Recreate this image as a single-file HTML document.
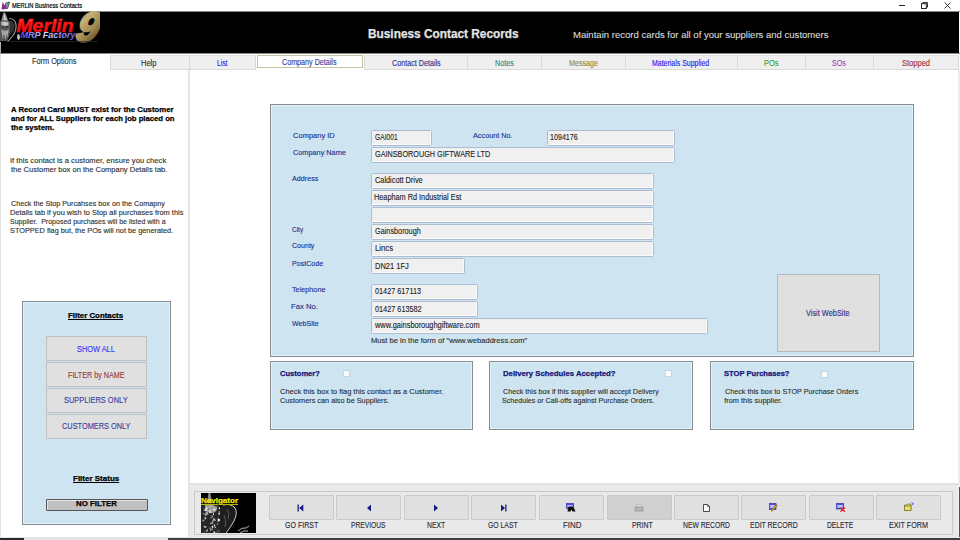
<!DOCTYPE html>
<html><head><meta charset="utf-8"><title>MERLIN Business Contacts</title>
<style>
*{margin:0;padding:0;box-sizing:border-box}
html,body{width:960px;height:540px;overflow:hidden;background:#fff;font-family:"Liberation Sans",sans-serif}
.a{position:absolute}
.t{position:absolute;white-space:pre;line-height:10px;transform-origin:0 0}
</style></head><body>
<div class="a" style="left:0px;top:0px;width:960px;height:11px;background:#fff"></div>
<svg class="a" style="left:1px;top:1px" width="9" height="9" viewBox="0 0 9 9">
<path d="M0.5 8.5 L1.5 1 L3.5 4.5 L5 1 L6 8 Z" fill="#8a2a8a"/>
<path d="M1.5 1 L3.5 4.5 L2.8 6 Z" fill="#c03060"/>
<path d="M5 1 L8.5 0.8 L6 8 Z" fill="#3a8a6a" opacity="0.8"/>
<path d="M6.5 2 L8.5 1 L6.5 8" stroke="#333" stroke-width="0.8" fill="none"/>
</svg>
<div class="a" style="left:899px;top:5px;width:6px;height:1px;background:#222"></div>
<svg class="a" style="left:921px;top:2px" width="7" height="7" viewBox="0 0 7 7">
<rect x="0.5" y="1.7" width="4.8" height="4.8" fill="none" stroke="#222" stroke-width="1"/>
<path d="M1.8 1.7 V0.5 H6.5 V5.2 H5.3" fill="none" stroke="#222" stroke-width="0.9"/>
</svg>
<svg class="a" style="left:944px;top:2px" width="7" height="7" viewBox="0 0 7 7">
<path d="M0.5 0.5 L6.5 6.5 M6.5 0.5 L0.5 6.5" stroke="#222" stroke-width="0.9"/>
</svg>
<div class="a" style="left:0px;top:11px;width:960px;height:1px;background:#8a8a8a"></div>
<div class="a" style="left:0px;top:12px;width:959px;height:41px;background:#000"></div>
<div class="a" style="left:0px;top:53px;width:960px;height:1px;background:#8a8a8a"></div>
<svg class="a" style="left:0;top:11px" width="100" height="32" viewBox="0 0 100 32">
<defs>
<linearGradient id="gr" x1="0" y1="0" x2="0" y2="1"><stop offset="0" stop-color="#ff8080"/><stop offset="0.3" stop-color="#ff2020"/><stop offset="1" stop-color="#e00000"/></linearGradient>
<linearGradient id="gb" x1="0" y1="0" x2="1" y2="0"><stop offset="0" stop-color="#4848f0"/><stop offset="0.45" stop-color="#d8d8ff"/><stop offset="1" stop-color="#5858f8"/></linearGradient>
<linearGradient id="gg" x1="0" y1="0" x2="0.6" y2="1"><stop offset="0" stop-color="#6a5a34"/><stop offset="0.35" stop-color="#c8b27a"/><stop offset="0.7" stop-color="#a08850"/><stop offset="1" stop-color="#5a4a24"/></linearGradient>
</defs>
<path d="M3.5 1.5 L5 1.5 L8.5 10.5 L1 10.5 Z" fill="#9a9a9a"/>
<path d="M4 2 L6.5 10 L4.2 10 Z" fill="#d8d8d8"/>
<path d="M0 10 Q5 8.5 10 10.5 L10.5 19 Q10 25 7 30 L0 30 Z" fill="#555"/>
<path d="M1.5 11 Q5 10 8.5 11.5 L8.5 14 Q5 16 1.5 14 Z" fill="#c4c4c4"/>
<path d="M2 16 H4 M5.5 16 H8" stroke="#222" stroke-width="1"/>
<path d="M1 18 Q5 21 9 18 Q8 23 5 25 Q2 23 1 18 Z" fill="#9a9a9a"/>
<path d="M2 20 L3 27 M5 21 L5.5 28 M8 20 L7 26" stroke="#d0d0d0" stroke-width="0.7"/>
<path d="M9 7.5 Q15.5 7.5 16 14 Q16.5 20 12.5 25 Q9.5 29 7.5 30.5" stroke="#9a9a9a" stroke-width="1.1" fill="none"/>
<path d="M10 9.5 Q14.5 10.5 14.5 15 Q14.5 20 10.5 24 L10 11 Z" fill="#333"/>
<ellipse cx="18.5" cy="26" rx="1.4" ry="3" fill="#c8c8c8"/>
<g transform="translate(87 30) skewX(-12) translate(-87 -30)"><text x="74.5" y="30.2" font-family="Liberation Sans" font-weight="bold" font-style="italic" font-size="41" fill="url(#gg)" stroke="url(#gg)" stroke-width="2.6" textLength="22.5" lengthAdjust="spacingAndGlyphs">9</text></g>
<text x="16.5" y="20.8" font-family="Liberation Sans" font-weight="bold" font-style="italic" font-size="18" fill="url(#gr)" stroke="#f01010" stroke-width="0.6" textLength="57" lengthAdjust="spacingAndGlyphs">Merlin</text>
<text x="20.5" y="27.2" font-family="Liberation Sans" font-weight="bold" font-style="italic" font-size="8.6" fill="url(#gb)" textLength="55" lengthAdjust="spacingAndGlyphs">MRP Factory</text>
<rect x="9" y="30" width="89" height="0.7" fill="#2c2c2c"/>
</svg>
<div class="a" style="left:0px;top:42px;width:1px;height:11px;background:#b0b0b0"></div>
<div class="a" style="left:0px;top:54px;width:1px;height:484px;background:#e2e2e2"></div>
<div class="a" style="left:110px;top:55px;width:80px;height:15px;background:#efefef;border:1px solid #dadada;border-top-color:#e4e4e4"></div>
<div class="a" style="left:189px;top:55px;width:67px;height:15px;background:#efefef;border:1px solid #dadada;border-top-color:#e4e4e4"></div>
<div class="a" style="left:364px;top:55px;width:104px;height:15px;background:#efefef;border:1px solid #dadada;border-top-color:#e4e4e4"></div>
<div class="a" style="left:467px;top:55px;width:75px;height:15px;background:#efefef;border:1px solid #dadada;border-top-color:#e4e4e4"></div>
<div class="a" style="left:541px;top:55px;width:85px;height:15px;background:#efefef;border:1px solid #dadada;border-top-color:#e4e4e4"></div>
<div class="a" style="left:625px;top:55px;width:113px;height:15px;background:#efefef;border:1px solid #dadada;border-top-color:#e4e4e4"></div>
<div class="a" style="left:737px;top:55px;width:69px;height:15px;background:#efefef;border:1px solid #dadada;border-top-color:#e4e4e4"></div>
<div class="a" style="left:805px;top:55px;width:69px;height:15px;background:#efefef;border:1px solid #dadada;border-top-color:#e4e4e4"></div>
<div class="a" style="left:873px;top:55px;width:86px;height:15px;background:#efefef;border:1px solid #dadada;border-top-color:#e4e4e4"></div>
<div class="a" style="left:257px;top:55px;width:106px;height:13px;background:#fff;border:1px solid #c4c4a2"></div>
<div class="a" style="left:188px;top:70px;width:2px;height:468px;background:#e6e6e6"></div>
<div class="a" style="left:958px;top:70px;width:2px;height:417px;background:#ececec"></div>
<div class="a" style="left:22px;top:301px;width:149px;height:224px;background:#cee4f1;border:1px solid #868b8d;box-shadow:inset 0 0 0 1px #dcf2fc"></div>
<div class="a" style="left:46px;top:336px;width:101px;height:25px;background:#e0e0e0;border:1px solid #c0c0c0;"></div>
<div class="a" style="left:46px;top:362px;width:101px;height:25px;background:#e0e0e0;border:1px solid #c0c0c0;"></div>
<div class="a" style="left:46px;top:388px;width:101px;height:25px;background:#e0e0e0;border:1px solid #c0c0c0;"></div>
<div class="a" style="left:46px;top:414px;width:101px;height:25px;background:#e0e0e0;border:1px solid #c0c0c0;"></div>
<div class="a" style="left:46px;top:499px;width:102px;height:12px;background:#c0c0c0;border:1px solid #555;border-radius:1px;box-shadow:inset 1px 1px 0 #e4e4e4"></div>
<div class="a" style="left:270px;top:104px;width:644px;height:253px;background:#cee4f1;border:1px solid #868b8d;box-shadow:inset 0 0 0 1px #dcf2fc"></div>
<div class="a" style="left:371px;top:130px;width:61px;height:16px;background:#f0f0f0;border:1px solid #adbcd0;border-radius:1.5px;box-shadow:inset -1px -1px 0 #fbfbfb"></div>
<div class="a" style="left:547px;top:130px;width:128px;height:16px;background:#f0f0f0;border:1px solid #adbcd0;border-radius:1.5px;box-shadow:inset -1px -1px 0 #fbfbfb"></div>
<div class="a" style="left:371px;top:147px;width:304px;height:16px;background:#f0f0f0;border:1px solid #adbcd0;border-radius:1.5px;box-shadow:inset -1px -1px 0 #fbfbfb"></div>
<div class="a" style="left:371px;top:173px;width:283px;height:16px;background:#f0f0f0;border:1px solid #adbcd0;border-radius:1.5px;box-shadow:inset -1px -1px 0 #fbfbfb"></div>
<div class="a" style="left:371px;top:190px;width:283px;height:16px;background:#f0f0f0;border:1px solid #adbcd0;border-radius:1.5px;box-shadow:inset -1px -1px 0 #fbfbfb"></div>
<div class="a" style="left:371px;top:207px;width:283px;height:16px;background:#f0f0f0;border:1px solid #adbcd0;border-radius:1.5px;box-shadow:inset -1px -1px 0 #fbfbfb"></div>
<div class="a" style="left:371px;top:224px;width:283px;height:16px;background:#f0f0f0;border:1px solid #adbcd0;border-radius:1.5px;box-shadow:inset -1px -1px 0 #fbfbfb"></div>
<div class="a" style="left:371px;top:241px;width:283px;height:16px;background:#f0f0f0;border:1px solid #adbcd0;border-radius:1.5px;box-shadow:inset -1px -1px 0 #fbfbfb"></div>
<div class="a" style="left:371px;top:258px;width:94px;height:16px;background:#f0f0f0;border:1px solid #adbcd0;border-radius:1.5px;box-shadow:inset -1px -1px 0 #fbfbfb"></div>
<div class="a" style="left:371px;top:284px;width:107px;height:16px;background:#f0f0f0;border:1px solid #adbcd0;border-radius:1.5px;box-shadow:inset -1px -1px 0 #fbfbfb"></div>
<div class="a" style="left:371px;top:301px;width:107px;height:16px;background:#f0f0f0;border:1px solid #adbcd0;border-radius:1.5px;box-shadow:inset -1px -1px 0 #fbfbfb"></div>
<div class="a" style="left:371px;top:318px;width:337px;height:16px;background:#f0f0f0;border:1px solid #adbcd0;border-radius:1.5px;box-shadow:inset -1px -1px 0 #fbfbfb"></div>
<div class="a" style="left:777px;top:274px;width:103px;height:78px;background:#e0e0e0;border:1px solid #c0c0c0;border-color:#b8b8b8"></div>
<div class="a" style="left:270px;top:361px;width:203px;height:69px;background:#cee4f1;border:1px solid #868b8d;box-shadow:inset 0 0 0 1px #dcf2fc"></div>
<div class="a" style="left:489px;top:361px;width:204px;height:69px;background:#cee4f1;border:1px solid #868b8d;box-shadow:inset 0 0 0 1px #dcf2fc"></div>
<div class="a" style="left:710px;top:361px;width:204px;height:69px;background:#cee4f1;border:1px solid #868b8d;box-shadow:inset 0 0 0 1px #dcf2fc"></div>
<div class="a" style="left:343px;top:370px;width:7px;height:7px;background:#fbfbfb;border:1px solid #c4d4e0"></div>
<div class="a" style="left:665px;top:370px;width:7px;height:7px;background:#fbfbfb;border:1px solid #c4d4e0"></div>
<div class="a" style="left:821px;top:371px;width:7px;height:7px;background:#fbfbfb;border:1px solid #c4d4e0"></div>
<div class="a" style="left:190px;top:483px;width:768px;height:55px;background:#e9e9e9"></div>
<div class="a" style="left:190px;top:483px;width:768px;height:3px;background:#e4e4e4"></div>
<div class="a" style="left:190px;top:486px;width:768px;height:1px;background:#f2f2f2"></div>
<div class="a" style="left:194px;top:491px;width:759px;height:44px;border:1px solid #c8c8c8"></div>
<div class="a" style="left:958px;top:487px;width:1px;height:51px;background:#f2f2f2"></div>
<div class="a" style="left:959px;top:487px;width:1px;height:53px;background:#505050"></div>
<div class="a" style="left:0px;top:537px;width:960px;height:1px;background:#e4e4e4"></div>
<div class="a" style="left:0px;top:538px;width:24px;height:2px;background:#2a2a2a"></div>
<div class="a" style="left:24px;top:538px;width:144px;height:2px;background:#e4e4e4"></div>
<div class="a" style="left:168px;top:538px;width:792px;height:2px;background:#404040"></div>
<div class="a" style="left:201px;top:493px;width:55px;height:40px;background:#000"></div>
<svg class="a" style="left:201px;top:493px" width="55" height="40" viewBox="0 0 55 40">
<path d="M7.5 0 L9.5 0 L11 10 L6 10 Z" fill="#8a8a8a"/>
<path d="M0 12 Q8 8 18 12 L22 22 L20 40 L0 40 Z" fill="#262626"/>
<path d="M4 12 Q10 10 16 14 Q17 18 12 20 Q6 20 4 16 Z" fill="#a0a0a0"/>
<rect x="7.8" y="16.2" width="0.9" height="1.4" fill="#ffffff"/><rect x="8.7" y="13.6" width="0.8" height="1.3" fill="#d8d8d8"/><rect x="2.5" y="14.5" width="0.9" height="1.5" fill="#606060"/><rect x="20.9" y="29.7" width="1.5" height="1.3" fill="#ffffff"/><rect x="21.5" y="13.3" width="1.1" height="1.0" fill="#d8d8d8"/><rect x="3.5" y="20.6" width="0.9" height="1.5" fill="#d8d8d8"/><rect x="4.9" y="14.7" width="1.5" height="1.5" fill="#ffffff"/><rect x="11.4" y="26.9" width="1.4" height="1.9" fill="#a0a0a0"/><rect x="8.6" y="19.0" width="1.6" height="1.1" fill="#d8d8d8"/><rect x="13.1" y="26.7" width="1.7" height="1.1" fill="#a0a0a0"/><rect x="21.6" y="15.3" width="1.0" height="1.2" fill="#606060"/><rect x="20.6" y="23.8" width="1.7" height="1.5" fill="#ffffff"/><rect x="19.4" y="20.8" width="1.5" height="1.5" fill="#a0a0a0"/><rect x="10.6" y="35.5" width="1.4" height="1.6" fill="#a0a0a0"/><rect x="2.3" y="31.6" width="1.1" height="1.3" fill="#606060"/><rect x="15.0" y="12.6" width="1.2" height="1.5" fill="#606060"/><rect x="11.4" y="18.1" width="1.0" height="1.1" fill="#a0a0a0"/><rect x="9.2" y="36.4" width="1.0" height="1.3" fill="#ffffff"/><rect x="6.8" y="15.8" width="1.8" height="1.1" fill="#606060"/><rect x="9.7" y="22.0" width="1.9" height="1.0" fill="#606060"/><rect x="4.7" y="18.5" width="0.8" height="1.8" fill="#d8d8d8"/><rect x="4.8" y="19.9" width="1.3" height="1.2" fill="#d8d8d8"/><rect x="12.9" y="38.7" width="1.3" height="1.8" fill="#ffffff"/><rect x="21.0" y="31.1" width="1.3" height="1.3" fill="#606060"/><rect x="11.1" y="23.2" width="0.9" height="1.1" fill="#d8d8d8"/><rect x="4.4" y="21.5" width="0.9" height="1.5" fill="#ffffff"/><rect x="12.3" y="38.6" width="0.9" height="1.0" fill="#ffffff"/><rect x="8.9" y="29.8" width="1.5" height="1.4" fill="#a0a0a0"/><rect x="3.4" y="25.7" width="1.4" height="1.2" fill="#606060"/><rect x="4.0" y="33.0" width="1.4" height="1.6" fill="#a0a0a0"/><rect x="11.8" y="17.7" width="1.0" height="1.5" fill="#a0a0a0"/><rect x="1.6" y="26.8" width="1.6" height="1.1" fill="#ffffff"/><rect x="8.7" y="16.7" width="1.4" height="1.7" fill="#d8d8d8"/><rect x="7.9" y="18.2" width="1.8" height="1.8" fill="#d8d8d8"/><rect x="16.5" y="18.3" width="1.2" height="0.8" fill="#606060"/><rect x="1.6" y="19.8" width="1.0" height="1.5" fill="#a0a0a0"/><rect x="8.2" y="34.6" width="1.9" height="1.2" fill="#a0a0a0"/><rect x="5.6" y="18.4" width="1.2" height="1.4" fill="#d8d8d8"/><rect x="21.7" y="29.1" width="1.4" height="1.6" fill="#ffffff"/><rect x="17.8" y="14.4" width="1.9" height="1.7" fill="#ffffff"/><rect x="16.8" y="25.4" width="1.3" height="1.6" fill="#d8d8d8"/><rect x="2.8" y="38.5" width="1.4" height="1.7" fill="#606060"/><rect x="2.8" y="16.4" width="0.8" height="1.5" fill="#d8d8d8"/><rect x="10.8" y="30.4" width="1.6" height="1.2" fill="#606060"/><rect x="12.5" y="15.7" width="1.8" height="1.7" fill="#ffffff"/><rect x="3.2" y="33.0" width="1.3" height="1.8" fill="#d8d8d8"/><rect x="18.3" y="17.9" width="1.1" height="1.4" fill="#a0a0a0"/><rect x="17.0" y="21.1" width="1.8" height="0.9" fill="#606060"/><rect x="16.5" y="37.1" width="1.8" height="1.9" fill="#606060"/><rect x="3.7" y="16.3" width="1.8" height="1.7" fill="#ffffff"/><rect x="13.8" y="33.7" width="1.0" height="1.4" fill="#d8d8d8"/><rect x="16.2" y="27.6" width="1.6" height="1.4" fill="#a0a0a0"/><rect x="11.1" y="33.7" width="1.1" height="1.1" fill="#ffffff"/><rect x="17.2" y="26.2" width="1.7" height="1.9" fill="#ffffff"/><rect x="10.3" y="29.2" width="1.6" height="1.3" fill="#d8d8d8"/><rect x="12.2" y="25.4" width="1.6" height="1.9" fill="#d8d8d8"/><rect x="20.8" y="19.3" width="1.8" height="1.0" fill="#d8d8d8"/><rect x="3.6" y="24.4" width="1.6" height="1.3" fill="#ffffff"/><rect x="5.5" y="20.5" width="1.9" height="1.0" fill="#ffffff"/><rect x="16.0" y="30.5" width="1.1" height="1.0" fill="#d8d8d8"/><rect x="10.8" y="32.9" width="1.3" height="1.4" fill="#ffffff"/><rect x="21.8" y="35.3" width="1.6" height="2.0" fill="#d8d8d8"/><rect x="9.5" y="23.8" width="1.2" height="1.7" fill="#a0a0a0"/><rect x="1.4" y="27.5" width="1.6" height="1.3" fill="#606060"/><rect x="11.9" y="20.3" width="0.9" height="1.9" fill="#ffffff"/><rect x="5.8" y="36.5" width="1.1" height="0.8" fill="#ffffff"/><rect x="17.4" y="19.6" width="1.8" height="1.8" fill="#d8d8d8"/><rect x="15.2" y="38.5" width="1.0" height="1.9" fill="#606060"/><rect x="13.0" y="31.6" width="1.1" height="1.8" fill="#ffffff"/><rect x="4.9" y="37.1" width="1.9" height="1.6" fill="#a0a0a0"/>
<path d="M19 14 Q27 9 33 14 Q37 19 34 26 Q30 34 24 40 L19 40 Z" fill="#1e1e1e"/>
<path d="M22 12 Q30 10 34 15 Q37 20 33 28 Q29 35 25 40" stroke="#cfcfcf" stroke-width="1" fill="none"/>
<path d="M26 16 Q29 20 27 26 M23 22 Q26 28 24 34" stroke="#6a6a6a" stroke-width="0.8" fill="none"/>
<path d="M37 38 Q41 34 45 35 L48 33 M39 40 Q43 37 47 38" stroke="#c8c8c8" stroke-width="0.9" fill="none"/>
</svg>
<div class="a" style="left:269px;top:495px;width:65px;height:25px;background:#e0e0e0;border:1px solid #cacaca;border-radius:1px;"></div>
<div class="a" style="left:336px;top:495px;width:65px;height:25px;background:#e0e0e0;border:1px solid #cacaca;border-radius:1px;"></div>
<div class="a" style="left:404px;top:495px;width:65px;height:25px;background:#e0e0e0;border:1px solid #cacaca;border-radius:1px;"></div>
<div class="a" style="left:471px;top:495px;width:65px;height:25px;background:#e0e0e0;border:1px solid #cacaca;border-radius:1px;"></div>
<div class="a" style="left:539px;top:495px;width:65px;height:25px;background:#e0e0e0;border:1px solid #cacaca;border-radius:1px;"></div>
<div class="a" style="left:607px;top:495px;width:65px;height:25px;background:#e0e0e0;border:1px solid #cacaca;border-radius:1px;background:#d0d0d0;border-color:#c8c8c8"></div>
<div class="a" style="left:674px;top:495px;width:65px;height:25px;background:#e0e0e0;border:1px solid #cacaca;border-radius:1px;"></div>
<div class="a" style="left:741px;top:495px;width:65px;height:25px;background:#e0e0e0;border:1px solid #cacaca;border-radius:1px;"></div>
<div class="a" style="left:809px;top:495px;width:65px;height:25px;background:#e0e0e0;border:1px solid #cacaca;border-radius:1px;"></div>
<div class="a" style="left:876px;top:495px;width:65px;height:25px;background:#e0e0e0;border:1px solid #cacaca;border-radius:1px;"></div>
<svg class="a" style="left:297px;top:504px" width="7" height="8" viewBox="0 0 7 8"><rect x="0.5" y="0.5" width="1.3" height="7" fill="#1a1a80"/><path d="M6.3 0.5 V7.5 L2.2 4 Z" fill="#1a1a80"/></svg>
<svg class="a" style="left:366px;top:504px" width="6" height="8" viewBox="0 0 6 8"><path d="M5 0.5 V7.5 L1 4 Z" fill="#1a1a80"/></svg>
<svg class="a" style="left:433px;top:504px" width="6" height="8" viewBox="0 0 6 8"><path d="M1 0.5 V7.5 L5 4 Z" fill="#1a1a80"/></svg>
<svg class="a" style="left:500px;top:504px" width="8" height="8" viewBox="0 0 8 8"><path d="M1 0.5 V7.5 L5 4 Z" fill="#1a1a80"/><rect x="5.2" y="0.5" width="1.3" height="7" fill="#1a1a80"/></svg>
<svg class="a" style="left:566px;top:503px" width="10" height="9" viewBox="0 0 10 9"><rect x="0.5" y="0.5" width="7" height="5" fill="#4a4aff" stroke="#2020a0" stroke-width="0.6"/><rect x="1.3" y="2" width="5.4" height="2.5" fill="#b8b8ff"/><path d="M2 5 Q2 3.5 3.5 3.5 L6 3.5 Q7.5 3.5 8 5 L9.5 8.5 L6.5 8.5 L5.5 6.5 L4.5 8.5 L1.5 8.5 Z" fill="#111"/></svg>
<svg class="a" style="left:634px;top:504px" width="10" height="8" viewBox="0 0 10 8"><path d="M2.5 0.5 H8 L8.5 3 H2.5 Z" fill="#e0e0e0" stroke="#a8a8a8" stroke-width="0.5"/><path d="M0.5 3.5 Q0.5 2.5 2 2.5 H8.5 Q9.5 2.5 9.5 3.5 V7.5 H0.5 Z" fill="#a4a4a4"/><path d="M2 5 H8" stroke="#cfcfcf" stroke-width="1"/></svg>
<svg class="a" style="left:703px;top:504px" width="7" height="8" viewBox="0 0 7 8"><path d="M0.5 0.5 H4.5 L6.5 2.5 V7.5 H0.5 Z" fill="#fff" stroke="#222" stroke-width="0.8"/><path d="M4.5 0.5 V2.5 H6.5" fill="none" stroke="#222" stroke-width="0.6"/></svg>
<svg class="a" style="left:769px;top:503px" width="9" height="9" viewBox="0 0 9 9"><rect x="0.5" y="0.5" width="6.5" height="6" fill="#5050e0" stroke="#202090" stroke-width="0.6"/><rect x="1.2" y="2" width="5" height="3" fill="#c0c0ff"/><path d="M3 8.5 L8.5 2.5 L7 1.5 L2 7 Z" fill="#c8a030" stroke="#604000" stroke-width="0.4"/></svg>
<svg class="a" style="left:836px;top:503px" width="10" height="9" viewBox="0 0 10 9"><rect x="0.5" y="0.5" width="7" height="5.5" fill="#5050e0" stroke="#202090" stroke-width="0.6"/><rect x="1.3" y="2" width="5.4" height="2.8" fill="#c0c0ff"/><path d="M4.5 4.5 L9 8.7 M9 4.5 L4.5 8.7" stroke="#e02020" stroke-width="1.3"/></svg>
<svg class="a" style="left:904px;top:502px" width="10" height="9" viewBox="0 0 10 9"><path d="M0.5 3 H3 L3.8 2 H7 V8.5 H0.5 Z" fill="#d8d060" stroke="#6a6020" stroke-width="0.6"/><rect x="0.5" y="4" width="6.5" height="4.5" fill="#e8e070" stroke="#6a6020" stroke-width="0.6"/><path d="M7.5 0.5 L9.3 1.5 L8.5 3" fill="none" stroke="#3030ff" stroke-width="0.8"/></svg>
<div id="title" class="t" style="left:11.59px;top:1.00px;font-size:7px;font-weight:normal;color:#000;transform:scaleX(0.8118);-webkit-text-stroke:0.12px #000;-webkit-text-stroke:0.2px #000">MERLIN Business Contacts</div>
<div id="hdr1" class="t" style="left:368.01px;top:29.00px;font-size:12px;font-weight:bold;color:#e4e4e4;transform:scaleX(0.9868);-webkit-text-stroke:0.25px #e4e4e4;">Business Contact Records</div>
<div id="hdr2" class="t" style="left:572.96px;top:30.01px;font-size:9.2px;font-weight:normal;color:#d8d8d8;transform:scaleX(1.0382);-webkit-text-stroke:0.12px #d8d8d8;">Maintain record cards for all of your suppliers and customers</div>
<div id="tab0" class="t" style="left:31.52px;top:57.01px;font-size:8.2px;font-weight:normal;color:#2a3040;transform:scaleX(0.8958);-webkit-text-stroke:0.12px #2a3040;">Form Options</div>
<div id="tab1" class="t" style="left:141.12px;top:59.01px;font-size:8.2px;font-weight:normal;color:#2a3040;transform:scaleX(0.9182);-webkit-text-stroke:0.12px #2a3040;">Help</div>
<div id="tab2" class="t" style="left:216.86px;top:59.01px;font-size:8.2px;font-weight:normal;color:#1818f0;transform:scaleX(0.8216);-webkit-text-stroke:0.12px #1818f0;">List</div>
<div id="tab3" class="t" style="left:282.08px;top:58.01px;font-size:8.2px;font-weight:normal;color:#38389a;transform:scaleX(0.8746);-webkit-text-stroke:0.12px #38389a;">Company Details</div>
<div id="tab4" class="t" style="left:391.78px;top:59.01px;font-size:8.2px;font-weight:normal;color:#2e2e8e;transform:scaleX(0.8770);-webkit-text-stroke:0.12px #2e2e8e;">Contact Details</div>
<div id="tab5" class="t" style="left:494.99px;top:59.01px;font-size:8.2px;font-weight:normal;color:#2a8890;transform:scaleX(0.8794);-webkit-text-stroke:0.12px #2a8890;">Notes</div>
<div id="tab6" class="t" style="left:569.06px;top:59.01px;font-size:8.2px;font-weight:normal;color:#8c8c40;transform:scaleX(0.8742);-webkit-text-stroke:0.12px #8c8c40;">Message</div>
<div id="tab7" class="t" style="left:652.47px;top:59.01px;font-size:8.2px;font-weight:normal;color:#2020f0;transform:scaleX(0.8495);-webkit-text-stroke:0.12px #2020f0;">Materials Supplied</div>
<div id="tab8" class="t" style="left:763.87px;top:59.01px;font-size:8.2px;font-weight:normal;color:#30a030;transform:scaleX(0.9075);-webkit-text-stroke:0.12px #30a030;">POs</div>
<div id="tab9" class="t" style="left:832.13px;top:59.01px;font-size:8.2px;font-weight:normal;color:#a040c0;transform:scaleX(0.8667);-webkit-text-stroke:0.12px #a040c0;">SOs</div>
<div id="tab10" class="t" style="left:902.15px;top:59.01px;font-size:8.2px;font-weight:normal;color:#a03030;transform:scaleX(0.9188);-webkit-text-stroke:0.12px #a03030;">Stopped</div>
<div id="l1" class="t" style="left:11.00px;top:105.00px;font-size:7.9px;font-weight:bold;color:#000000;transform:scaleX(0.9820);-webkit-text-stroke:0.25px #000000;">A Record Card MUST exist for the Customer</div>
<div id="l2" class="t" style="left:11.00px;top:114.00px;font-size:7.9px;font-weight:bold;color:#000000;transform:scaleX(0.9738);-webkit-text-stroke:0.25px #000000;">and for ALL Suppliers for each job placed on</div>
<div id="l3" class="t" style="left:11.00px;top:123.00px;font-size:7.9px;font-weight:bold;color:#000000;transform:scaleX(0.9958);-webkit-text-stroke:0.25px #000000;">the system.</div>
<div id="l4" class="t" style="left:9.97px;top:156.01px;font-size:7.4px;font-weight:normal;color:#2c302c;transform:scaleX(1.0333);-webkit-text-stroke:0.12px #2c302c;">If this contact is a customer, ensure you check</div>
<div id="l5" class="t" style="left:11.00px;top:165.01px;font-size:7.4px;font-weight:normal;color:#2c302c;transform:scaleX(1.0176);-webkit-text-stroke:0.12px #2c302c;">the Customer box on the Company Details tab.</div>
<div id="l6" class="t" style="left:11.00px;top:199.01px;font-size:7.4px;font-weight:normal;color:#2c302c;transform:scaleX(0.9750);-webkit-text-stroke:0.12px #2c302c;">Check the Stop Purcahses box on the Comapny</div>
<div id="l7" class="t" style="left:10.00px;top:208.00px;font-size:7.4px;font-weight:normal;color:#2c302c;transform:scaleX(1.0026);-webkit-text-stroke:0.12px #2c302c;">Details tab if you wish to Stop all purchases from this</div>
<div id="l8" class="t" style="left:10.05px;top:217.00px;font-size:7.4px;font-weight:normal;color:#2c302c;transform:scaleX(0.9490);-webkit-text-stroke:0.12px #2c302c;">Supplier.  Proposed purchases will be listed with a</div>
<div id="l9" class="t" style="left:10.01px;top:226.01px;font-size:7.4px;font-weight:normal;color:#2c302c;transform:scaleX(0.9917);-webkit-text-stroke:0.12px #2c302c;">STOPPED flag but, the POs will not be generated.</div>
<div id="f1" class="t" style="left:68.27px;top:311.00px;font-size:7.9px;font-weight:bold;color:#000000;transform:scaleX(0.9971);-webkit-text-stroke:0.25px #000000;text-decoration:underline">Filter Contacts</div>
<div id="f2" class="t" style="left:76.57px;top:344.00px;font-size:8.8px;font-weight:normal;color:#3434fa;transform:scaleX(0.8417);-webkit-text-stroke:0.12px #3434fa;">SHOW ALL</div>
<div id="f3" class="t" style="left:68.04px;top:370.00px;font-size:8.8px;font-weight:normal;color:#943c3c;transform:scaleX(0.8149);-webkit-text-stroke:0.12px #943c3c;">FILTER by NAME</div>
<div id="f4" class="t" style="left:63.85px;top:395.00px;font-size:8.8px;font-weight:normal;color:#3c3c9c;transform:scaleX(0.8465);-webkit-text-stroke:0.12px #3c3c9c;">SUPPLIERS ONLY</div>
<div id="f5" class="t" style="left:61.86px;top:421.00px;font-size:8.8px;font-weight:normal;color:#3c3c9c;transform:scaleX(0.8377);-webkit-text-stroke:0.12px #3c3c9c;">CUSTOMERS ONLY</div>
<div id="f6" class="t" style="left:73.31px;top:474.01px;font-size:7.9px;font-weight:bold;color:#000000;transform:scaleX(1.0141);-webkit-text-stroke:0.25px #000000;text-decoration:underline">Filter Status</div>
<div id="f7" class="t" style="left:76.24px;top:499.01px;font-size:7.9px;font-weight:bold;color:#000000;transform:scaleX(0.9960);-webkit-text-stroke:0.25px #000000;">NO FILTER</div>
<div id="lb1" class="t" style="left:293.08px;top:131.01px;font-size:7.5px;font-weight:normal;color:#24308a;-webkit-text-stroke:0.12px #24308a;">Company ID</div>
<div id="lb2" class="t" style="left:293.11px;top:148.01px;font-size:7.5px;font-weight:normal;color:#24308a;transform:scaleX(0.9746);-webkit-text-stroke:0.12px #24308a;">Company Name</div>
<div id="lb3" class="t" style="left:473.30px;top:131.01px;font-size:7.5px;font-weight:normal;color:#24308a;transform:scaleX(0.9703);-webkit-text-stroke:0.12px #24308a;">Account No.</div>
<div id="lb4" class="t" style="left:292.22px;top:174.01px;font-size:7.5px;font-weight:normal;color:#24308a;transform:scaleX(0.9563);-webkit-text-stroke:0.12px #24308a;">Address</div>
<div id="lb5" class="t" style="left:292.24px;top:225.01px;font-size:7.5px;font-weight:normal;color:#24308a;transform:scaleX(0.8644);-webkit-text-stroke:0.12px #24308a;">City</div>
<div id="lb6" class="t" style="left:292.22px;top:241.00px;font-size:7.5px;font-weight:normal;color:#24308a;transform:scaleX(0.9414);-webkit-text-stroke:0.12px #24308a;">County</div>
<div id="lb7" class="t" style="left:292.17px;top:259.01px;font-size:7.5px;font-weight:normal;color:#24308a;transform:scaleX(0.9462);-webkit-text-stroke:0.12px #24308a;">PostCode</div>
<div id="lb8" class="t" style="left:292.40px;top:285.01px;font-size:7.5px;font-weight:normal;color:#24308a;transform:scaleX(0.9662);-webkit-text-stroke:0.12px #24308a;">Telephone</div>
<div id="lb9" class="t" style="left:291.43px;top:302.00px;font-size:7.5px;font-weight:normal;color:#24308a;transform:scaleX(1.0252);-webkit-text-stroke:0.12px #24308a;">Fax No.</div>
<div id="lb10" class="t" style="left:292.41px;top:319.00px;font-size:7.5px;font-weight:normal;color:#24308a;transform:scaleX(0.9440);-webkit-text-stroke:0.12px #24308a;">WebSite</div>
<div id="v1" class="t" style="left:375.30px;top:132.01px;font-size:8.7px;font-weight:normal;color:#1c1c1c;transform:scaleX(0.7675);-webkit-text-stroke:0.12px #1c1c1c;">GAI001</div>
<div id="v2" class="t" style="left:550.18px;top:132.01px;font-size:8.7px;font-weight:normal;color:#1c1c1c;transform:scaleX(0.8205);-webkit-text-stroke:0.12px #1c1c1c;">1094176</div>
<div id="v3" class="t" style="left:375.28px;top:149.01px;font-size:8.7px;font-weight:normal;color:#1c1c1c;transform:scaleX(0.8350);-webkit-text-stroke:0.12px #1c1c1c;">GAINSBOROUGH GIFTWARE LTD</div>
<div id="v4" class="t" style="left:374.72px;top:175.01px;font-size:8.7px;font-weight:normal;color:#1c1c1c;transform:scaleX(0.8443);-webkit-text-stroke:0.12px #1c1c1c;">Caldicott Drive</div>
<div id="v5" class="t" style="left:373.71px;top:192.01px;font-size:8.7px;font-weight:normal;color:#1c1c1c;transform:scaleX(0.8410);-webkit-text-stroke:0.12px #1c1c1c;">Heapham Rd Industrial Est</div>
<div id="v6" class="t" style="left:374.73px;top:226.01px;font-size:8.7px;font-weight:normal;color:#1c1c1c;transform:scaleX(0.8383);-webkit-text-stroke:0.12px #1c1c1c;">Gainsborough</div>
<div id="v7" class="t" style="left:374.68px;top:243.01px;font-size:8.7px;font-weight:normal;color:#1c1c1c;transform:scaleX(0.8947);-webkit-text-stroke:0.12px #1c1c1c;">Lincs</div>
<div id="v8" class="t" style="left:374.67px;top:261.00px;font-size:8.7px;font-weight:normal;color:#1c1c1c;transform:scaleX(0.8643);-webkit-text-stroke:0.12px #1c1c1c;">DN21 1FJ</div>
<div id="v9" class="t" style="left:375.14px;top:286.01px;font-size:8.7px;font-weight:normal;color:#1c1c1c;transform:scaleX(0.8373);-webkit-text-stroke:0.12px #1c1c1c;">01427 617113</div>
<div id="v10" class="t" style="left:375.16px;top:304.00px;font-size:8.7px;font-weight:normal;color:#1c1c1c;transform:scaleX(0.8400);-webkit-text-stroke:0.12px #1c1c1c;">01427 613582</div>
<div id="v11" class="t" style="left:375.14px;top:320.00px;font-size:8.7px;font-weight:normal;color:#1c1c1c;transform:scaleX(0.8525);-webkit-text-stroke:0.12px #1c1c1c;">www.gainsboroughgiftware.com</div>
<div id="must" class="t" style="left:371.09px;top:336.01px;font-size:7.4px;font-weight:normal;color:#2c302c;transform:scaleX(1.0263);-webkit-text-stroke:0.12px #2c302c;">Must be in the form of &quot;www.webaddress.com&quot;</div>
<div id="visit" class="t" style="left:805.84px;top:308.01px;font-size:9px;font-weight:normal;color:#2c2c8c;transform:scaleX(0.8194);-webkit-text-stroke:0.12px #2c2c8c;">Visit WebSite</div>
<div id="c1" class="t" style="left:280.41px;top:369.01px;font-size:7.9px;font-weight:bold;color:#141478;transform:scaleX(0.9568);-webkit-text-stroke:0.25px #141478;">Customer?</div>
<div id="c2" class="t" style="left:502.70px;top:369.01px;font-size:7.9px;font-weight:bold;color:#141478;transform:scaleX(0.9824);-webkit-text-stroke:0.25px #141478;">Delivery Schedules Accepted?</div>
<div id="c3" class="t" style="left:724.22px;top:369.01px;font-size:7.9px;font-weight:bold;color:#141478;transform:scaleX(0.9615);-webkit-text-stroke:0.25px #141478;">STOP Purchases?</div>
<div id="d1" class="t" style="left:280.40px;top:387.00px;font-size:7.4px;font-weight:normal;color:#2c302c;transform:scaleX(1.0088);-webkit-text-stroke:0.12px #2c302c;">Check this box to flag this contact as a Customer.</div>
<div id="d2" class="t" style="left:280.38px;top:396.00px;font-size:7.4px;font-weight:normal;color:#2c302c;transform:scaleX(0.9884);-webkit-text-stroke:0.12px #2c302c;">Customers can also be Suppliers.</div>
<div id="d3" class="t" style="left:502.70px;top:387.00px;font-size:7.4px;font-weight:normal;color:#2c302c;transform:scaleX(0.9698);-webkit-text-stroke:0.12px #2c302c;">Check this box if this supplier will accept Delivery</div>
<div id="d4" class="t" style="left:501.70px;top:396.00px;font-size:7.4px;font-weight:normal;color:#2c302c;transform:scaleX(0.9639);-webkit-text-stroke:0.12px #2c302c;">Schedules or Call-offs against Purchase Orders.</div>
<div id="d5" class="t" style="left:725.21px;top:387.00px;font-size:7.4px;font-weight:normal;color:#2c302c;transform:scaleX(0.9769);-webkit-text-stroke:0.12px #2c302c;">Check this box to STOP Purchase Orders</div>
<div id="d6" class="t" style="left:724.20px;top:396.00px;font-size:7.4px;font-weight:normal;color:#2c302c;-webkit-text-stroke:0.12px #2c302c;">from this supplier.</div>
<div id="n1" class="t" style="left:284.56px;top:521.01px;font-size:8.2px;font-weight:normal;color:#262c3a;transform:scaleX(0.8588);-webkit-text-stroke:0.12px #262c3a;">GO FIRST</div>
<div id="n2" class="t" style="left:351.14px;top:521.01px;font-size:8.2px;font-weight:normal;color:#262c3a;transform:scaleX(0.8165);-webkit-text-stroke:0.12px #262c3a;">PREVIOUS</div>
<div id="n3" class="t" style="left:427.13px;top:521.01px;font-size:8.2px;font-weight:normal;color:#262c3a;transform:scaleX(0.8319);-webkit-text-stroke:0.12px #262c3a;">NEXT</div>
<div id="n4" class="t" style="left:487.73px;top:521.01px;font-size:8.2px;font-weight:normal;color:#262c3a;transform:scaleX(0.8356);-webkit-text-stroke:0.12px #262c3a;">GO LAST</div>
<div id="n5" class="t" style="left:563.03px;top:521.01px;font-size:8.2px;font-weight:normal;color:#262c3a;transform:scaleX(0.9694);-webkit-text-stroke:0.12px #262c3a;">FIND</div>
<div id="n6" class="t" style="left:632.16px;top:521.01px;font-size:8.2px;font-weight:normal;color:#262c3a;transform:scaleX(0.8441);-webkit-text-stroke:0.12px #262c3a;">PRINT</div>
<div id="n7" class="t" style="left:682.87px;top:521.01px;font-size:8.2px;font-weight:normal;color:#262c3a;transform:scaleX(0.8258);-webkit-text-stroke:0.12px #262c3a;">NEW RECORD</div>
<div id="n8" class="t" style="left:749.83px;top:521.01px;font-size:8.2px;font-weight:normal;color:#262c3a;transform:scaleX(0.8473);-webkit-text-stroke:0.12px #262c3a;">EDIT RECORD</div>
<div id="n9" class="t" style="left:827.41px;top:521.01px;font-size:8.2px;font-weight:normal;color:#262c3a;transform:scaleX(0.8208);-webkit-text-stroke:0.12px #262c3a;">DELETE</div>
<div id="n10" class="t" style="left:889.14px;top:521.01px;font-size:8.2px;font-weight:normal;color:#262c3a;transform:scaleX(0.8786);-webkit-text-stroke:0.12px #262c3a;">EXIT FORM</div>
<div id="nav" class="t" style="left:201.17px;top:496.00px;font-size:7.9px;font-weight:bold;color:#ecec00;transform:scaleX(1.0178);-webkit-text-stroke:0.25px #ecec00;text-decoration:underline;text-decoration-thickness:1px;text-decoration-color:#b8b800">Navigator</div>
</body></html>
